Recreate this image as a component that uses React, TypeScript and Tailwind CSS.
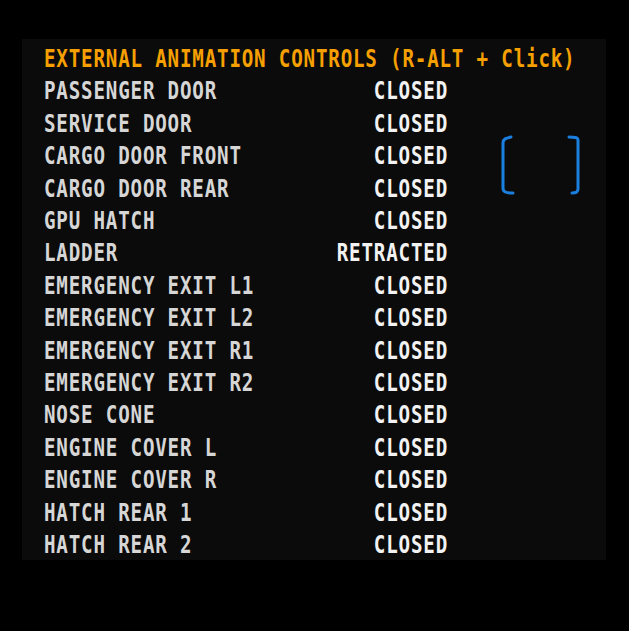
import React from 'react';

interface Row {
  label: string;
  state: string;
}

const rows: Row[] = [
  { label: 'PASSENGER DOOR', state: 'CLOSED' },
  { label: 'SERVICE DOOR', state: 'CLOSED' },
  { label: 'CARGO DOOR FRONT', state: 'CLOSED' },
  { label: 'CARGO DOOR REAR', state: 'CLOSED' },
  { label: 'GPU HATCH', state: 'CLOSED' },
  { label: 'LADDER', state: 'RETRACTED' },
  { label: 'EMERGENCY EXIT L1', state: 'CLOSED' },
  { label: 'EMERGENCY EXIT L2', state: 'CLOSED' },
  { label: 'EMERGENCY EXIT R1', state: 'CLOSED' },
  { label: 'EMERGENCY EXIT R2', state: 'CLOSED' },
  { label: 'NOSE CONE', state: 'CLOSED' },
  { label: 'ENGINE COVER L', state: 'CLOSED' },
  { label: 'ENGINE COVER R', state: 'CLOSED' },
  { label: 'HATCH REAR 1', state: 'CLOSED' },
  { label: 'HATCH REAR 2', state: 'CLOSED' },
];

const App: React.FC = () => {
  return (
    <div className="w-[629px] h-[631px] bg-black pt-[39px] pl-[22px]">
      <div className="relative w-[584px] h-[521px] bg-[#0b0b0b] pt-[4px] pl-[22px]">
        {/* condensed mono text block */}
        <div className="origin-top-left scale-x-80 font-['DejaVu_Sans_Mono',monospace] font-bold text-[24px] leading-[32.4px] tracking-[1px]">
          <div className="text-[#f5a000] whitespace-pre">EXTERNAL ANIMATION CONTROLS (R-ALT + Click)</div>
          {rows.map((row) => (
            <div key={row.label} className="flex w-[505px] justify-between whitespace-pre">
              <span className="text-[#d6d6d6]">{row.label}</span>
              <span className="text-[#f2f2f2]">{row.state}</span>
            </div>
          ))}
        </div>

        {/* selection marker */}
        <svg
          className="absolute left-[476px] top-[94px]"
          width="86"
          height="64"
          viewBox="0 0 86 64"
          fill="none"
          stroke="#1b7fdf"
          strokeWidth="3"
          strokeLinecap="round"
          strokeLinejoin="round"
        >
          <path d="M13 4 C8 5 5 6 5 10 L5 55 C5 59 8 60 15 60" />
          <path d="M71 4 C76 4 80 4 80 7 L80 56 C80 59 78 60 74 60" />
        </svg>
      </div>
    </div>
  );
};

export default App;
